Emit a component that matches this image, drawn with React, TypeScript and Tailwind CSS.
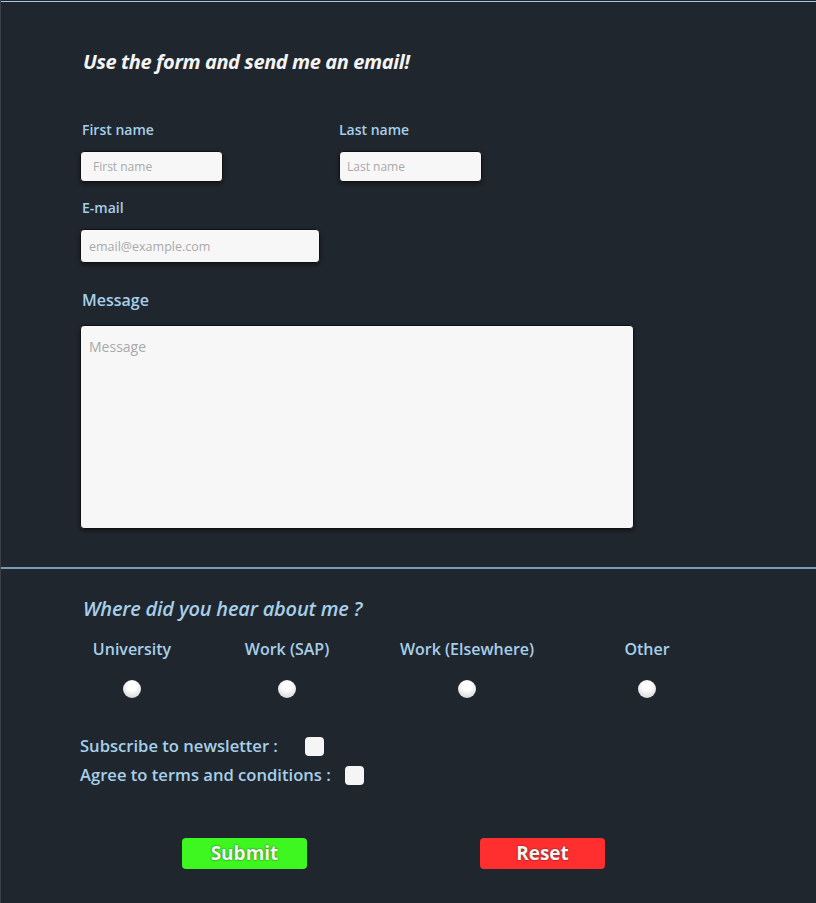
import { useState } from "react";

const sources = [
  { label: "University", value: "university" },
  { label: "Work (SAP)", value: "sap" },
  { label: "Work (Elsewhere)", value: "elsewhere" },
  { label: "Other", value: "other" },
];

const inputBase =
  "bg-[#f7f7f7] border border-[#111] rounded-[4px] shadow-[0_2px_4px_rgba(0,0,0,0.45)] text-[#333] placeholder:text-[#a9a9a9] outline-none";

export default function App() {
  const [source, setSource] = useState<string | null>(null);

  return (
    <div className="min-h-[903px] bg-[#20262e] border-l border-[#3a4048] pt-px font-['Open_Sans',sans-serif]">
      <div className="border-t border-[#a9c9e2]">
        <form onSubmit={(e) => e.preventDefault()}>
          <section className="pl-[79px] pt-[46px] pb-[38px]">
            <h1 className="ml-[3px] text-[20px] leading-[28px] font-bold italic text-[#f4f4f4] tracking-[-0.4px]">
              Use the form and send me an email!
            </h1>

            <div className="mt-[44px] flex gap-[116px]">
              <div>
                <label className="block ml-[2px] text-[14px] font-semibold leading-[20px] text-[#a6cfe9]">First name</label>
                <input placeholder="First name" className={`${inputBase} mt-[11px] w-[143px] h-[31px] pl-[12px] text-[12px]`} />
              </div>
              <div>
                <label className="block text-[14px] font-semibold leading-[20px] text-[#a6cfe9]">Last name</label>
                <input placeholder="Last name" className={`${inputBase} mt-[11px] w-[143px] h-[31px] pl-[7px] text-[12px]`} />
              </div>
            </div>

            <label className="block mt-[16px] ml-[2px] text-[14px] font-semibold leading-[20px] text-[#a6cfe9]">E-mail</label>
            <input placeholder="email@example.com" className={`${inputBase} block mt-[11px] w-[240px] h-[34px] pl-[8px] text-[12.5px]`} />

            <label className="block mt-[25px] ml-[2px] text-[16px] font-semibold leading-[24px] text-[#a6cfe9]">Message</label>
            <textarea placeholder="Message" className={`${inputBase} block mt-[13px] w-[554px] h-[204px] px-[8px] py-[10px] text-[14px] resize-none`} />
          </section>

          <div className="h-[2px] bg-[#7a9bb6]" />

          <section className="pt-[28px] pb-[33px]">
            <h2 className="ml-[82px] text-[20px] leading-[24px] italic font-semibold text-[#a6cfe9] tracking-[-0.2px]">
              Where did you hear about me ?
            </h2>

            <div className="mt-[18px] ml-[71px] grid grid-cols-[120px_190px_170px_190px]">
              {sources.map((s) => (
                <label key={s.value} className="flex flex-col items-center cursor-pointer">
                  <span className="text-[16px] font-semibold leading-[20px] text-[#a6cfe9]">{s.label}</span>
                  <input
                    type="radio"
                    name="source"
                    checked={source === s.value}
                    onChange={() => setSource(s.value)}
                    className="mt-[21px] w-[18px] h-[18px] appearance-none rounded-full bg-[radial-gradient(circle_at_50%_35%,#ffffff_30%,#c9c9c9_100%)] checked:bg-[radial-gradient(circle,#2b6cb0_35%,#f0f0f0_40%)]"
                  />
                </label>
              ))}
            </div>

            <div className="mt-[38px] ml-[79px] flex flex-col gap-[9px]">
              <label className="flex items-center text-[16.6px] font-semibold leading-[20px] text-[#a6cfe9]">
                Subscribe to newsletter :
                <input type="checkbox" className="ml-[27px] w-[19px] h-[19px] appearance-none rounded-[4px] bg-[#f5f5f5] checked:bg-[#3b82f6]" />
              </label>
              <label className="flex items-center text-[16.6px] font-semibold leading-[20px] text-[#a6cfe9]">
                Agree to terms and conditions :
                <input type="checkbox" className="ml-[14px] w-[19px] h-[19px] appearance-none rounded-[4px] bg-[#f5f5f5] checked:bg-[#3b82f6]" />
              </label>
            </div>

            <div className="mt-[53px] flex">
              <button type="submit" className="ml-[181px] w-[125px] h-[31px] rounded-[4px] bg-[#3ef721] text-[19px] font-bold leading-none text-[#f4f4f4] [text-shadow:0_0_2px_rgba(0,0,0,0.7)]">
                Submit
              </button>
              <button type="reset" className="ml-[173px] w-[125px] h-[31px] rounded-[4px] bg-[#ff2f30] text-[19px] font-bold leading-none text-[#f4f4f4] [text-shadow:0_0_2px_rgba(0,0,0,0.7)]">
                Reset
              </button>
            </div>
          </section>
        </form>
      </div>
    </div>
  );
}
